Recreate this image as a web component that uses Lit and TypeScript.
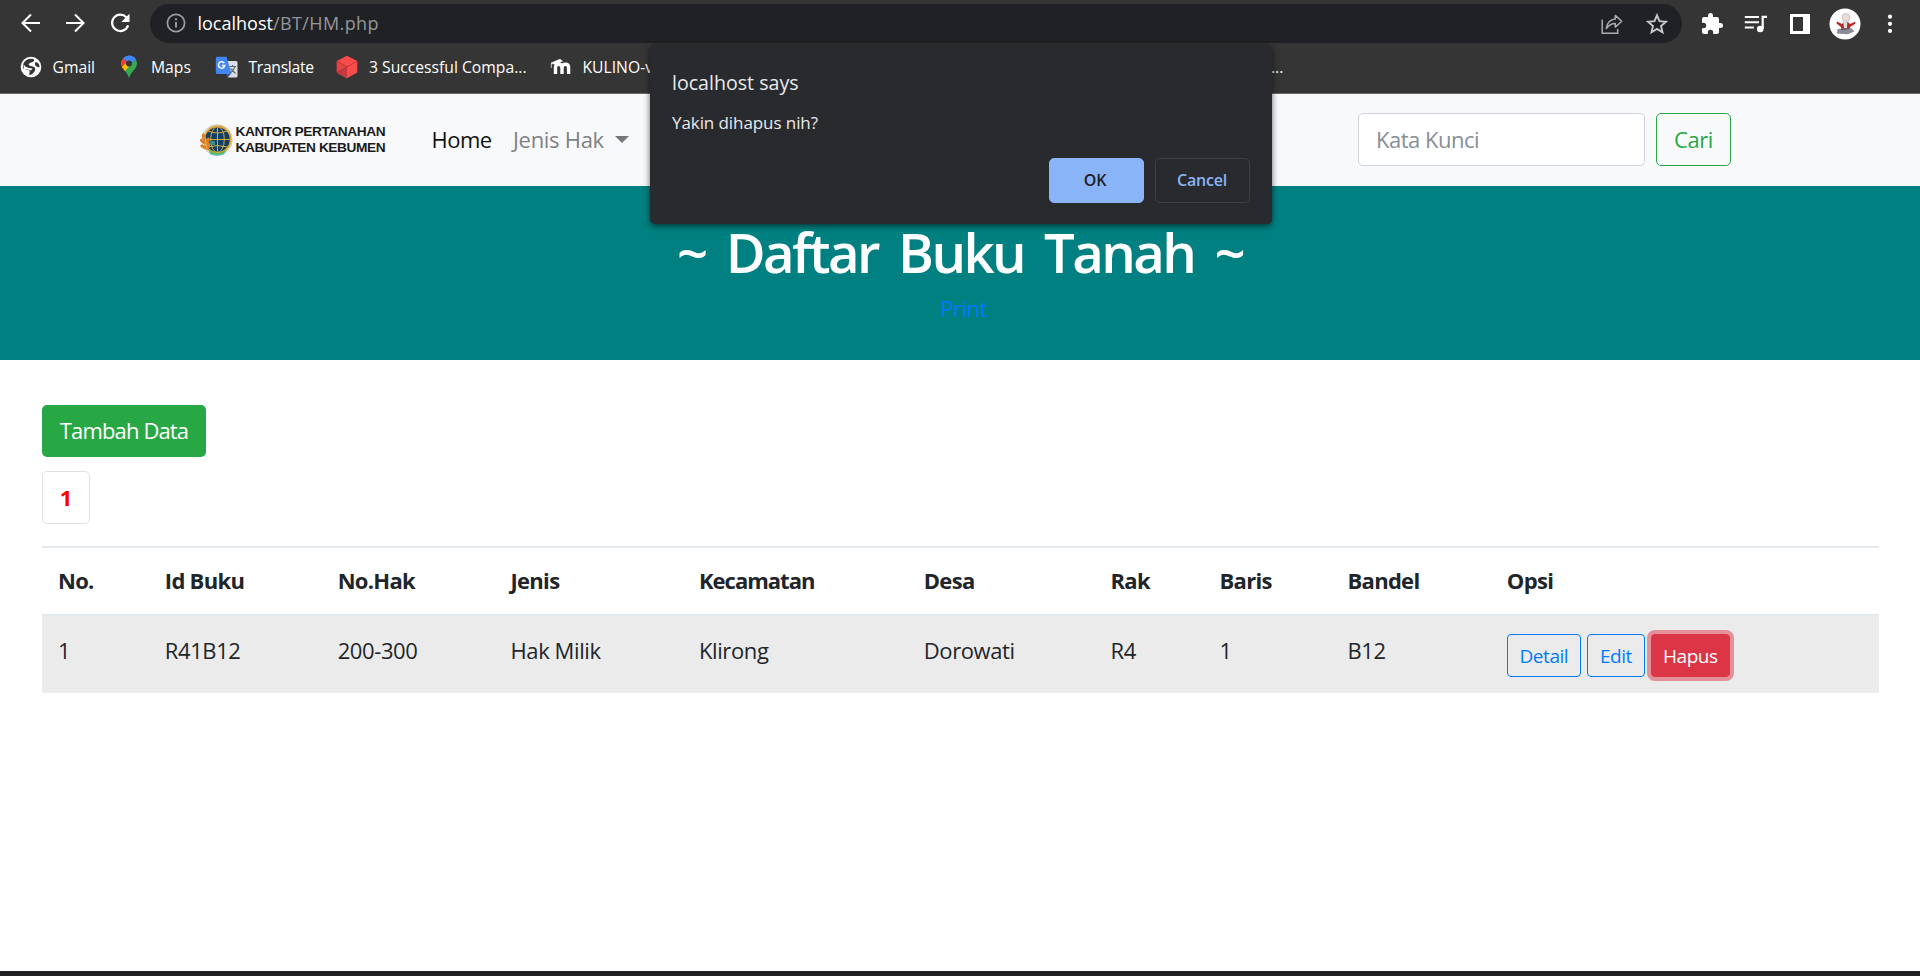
import { LitElement, html, css, svg } from "lit";
import { customElement, property } from "lit/decorators.js";

const globe = svg`<svg width="22" height="22" viewBox="0 0 22 22"><circle cx="11" cy="11" r="10.300" fill="#fff"/><path d="M3.200 8C4.500 4.500 8 2.600 12 2.800 13.500 3 14.500 3.500 14 5 12.500 6.800 9.500 6.500 8.700 8 8.500 9.500 10 10 12 10.200 14.500 10.500 15.800 12 15.200 14 14.500 16.500 12 18.500 9.500 19.200 8.800 17.500 10.500 15.500 9 14.300 7 13.500 4.500 13.800 3 12.300Z" fill="#353535"/><path d="M3.500 8.500Q5.500 11.500 9 12L12.500 12.500 11 14.500 8 13.500 4 13.500Z" fill="#fff"/><path d="M15 6.500Q17.500 5.800 19 8.200 19.700 10 19.300 11.500 16.500 11.300 15 9Z" fill="#353535"/></svg>`;
const maps = svg`<svg width="18" height="24" viewBox="0 0 18 24"><path d="M9 .5a8 8 0 0 0-6.200 3L7 7l4.500-6.100A8 8 0 0 0 9 .5Z" fill="#4285f4"/><path d="M2.800 3.500A8 8 0 0 0 1.800 12L7 7Z" fill="#ea4335"/><path d="M1.800 12l3.300 4.300L11 10.500 7 7Z" fill="#fbbc04"/><path d="M11.500.9A8 8 0 0 1 16 12.200C14.500 15 10.500 18 9 23.500 8.300 20.500 7 18.500 5.100 16.300L15.500 4Z" fill="#34a853"/><path d="M9 .5A8 8 0 0 1 15.900 4.200L11 9 7 6Z" fill="#4285f4"/><circle cx="9" cy="8.400" r="3" fill="#353535"/></svg>`;
const translate = svg`<svg width="23" height="23" viewBox="0 0 23 23"><path d="M9 5h12a1.500 1.500 0 0 1 1.500 1.500V20a1.500 1.500 0 0 1-1.500 1.500h-8Z" fill="#dcdfe3"/><path d="M12 17h4.500L12.500 22Z" fill="#3552b5"/><path d="M2 .8h9.500L16.500 18H2A1.500 1.500 0 0 1 .8 16.500V2A1.500 1.500 0 0 1 2 .8Z" fill="#4285f4"/><path d="M9.300 7.200A3.200 3.200 0 1 0 9.800 9.500H6.800" fill="none" stroke="#fff" stroke-width="1.500"/><path d="M14.300 10.500H21M17.500 9v1.500M20 10.500C19 14 17 15.500 15.200 17M15.500 12.500 20.500 17.500" fill="none" stroke="#5d6a75" stroke-width="1.100"/></svg>`;
const cube = svg`<svg width="22" height="24" viewBox="0 0 22 24"><path d="M11 .8 21.300 6v11.500L11 23.200.8 17.500V6Z" fill="#fa4b4b"/><path d="M.8 6 11 11.800v11.400L.8 17.500Z" fill="#e54345"/><path d="M11 11.800.8 17.500 11 23.200Z" fill="#c63c3e"/><path d="M.8 6 11 11.800 21.300 6M11 12 1 17.400" fill="none" stroke="#9a2d30" stroke-width=".6"/></svg>`;
const moodle = svg`<svg width="22" height="18" viewBox="0 0 22 18"><path d="M5.500 16V9.500Q5.500 6.300 8.700 6.300T12 9.500V16M12 9.500Q12 6.300 15.300 6.300T18.600 9.500V16" fill="none" stroke="#fff" stroke-width="3.400"/><path d="M1 5 10 1.200 12.500 3 6 6.500 1.300 5.500V10" fill="#fff" stroke="#eee" stroke-width=".7"/></svg>`;
const back = svg`<svg width="24" height="24" viewBox="0 0 24 24"><path d="M21 12H4M12 3.500 3.500 12l8.500 8.500" fill="none" stroke="#fff" stroke-width="2"/></svg>`;
const forward = svg`<svg width="24" height="24" viewBox="0 0 24 24"><path d="M3 12h17M12 3.500 20.500 12 12 20.500" fill="none" stroke="#fff" stroke-width="2"/></svg>`;
const reload = svg`<svg width="24" height="24" viewBox="0 0 24 24"><path d="M18.300 6.200A8.200 8.200 0 1 0 20.100 14.300" fill="none" stroke="#fff" stroke-width="2.200"/><path d="M21.500 2.800v8.200h-8.200Z" fill="#fff"/></svg>`;
const info = svg`<svg width="20" height="20" viewBox="0 0 20 20"><circle cx="10" cy="10" r="8.600" fill="none" stroke="#9aa0a6" stroke-width="1.700"/><path d="M10 9v5.500M10 5.200v2" stroke="#9aa0a6" stroke-width="1.900"/></svg>`;
const share = svg`<svg width="22" height="22" viewBox="0 0 22 22"><path d="M1.200 6.500v13.700h15.500V16" fill="none" stroke="#a9abae" stroke-width="1.500"/><path d="M5.300 15.500C6 10 9 6.500 14.300 6V2.400L20.700 8.300l-6.400 5.800V10.500C10 10.500 7.500 12.500 5.300 15.500Z" fill="none" stroke="#a9abae" stroke-width="1.500" stroke-linejoin="round"/></svg>`;
const star = svg`<svg width="22" height="22" viewBox="0 0 22 22"><path d="M11 2.300 13.500 8.200 19.900 8.800 15 13 16.500 19.300 11 15.900 5.500 19.300 7 13 2.100 8.800 8.500 8.200Z" fill="none" stroke="#c6c7c9" stroke-width="1.900"/></svg>`;
const puzzle = svg`<svg width="24" height="24" viewBox="0 0 24 24"><path d="M20.500 11H19V7c0-1.100-.9-2-2-2h-4V3.500a2.500 2.500 0 0 0-5 0V5H4c-1.100 0-2 .9-2 2v3.800h1.500a2.700 2.700 0 0 1 0 5.400H2V20c0 1.100.9 2 2 2h3.800v-1.500a2.700 2.700 0 0 1 5.400 0V22H17c1.100 0 2-.9 2-2v-4h1.500a2.500 2.500 0 0 0 0-5Z" fill="#fff"/></svg>`;
const queue = svg`<svg width="24" height="20" viewBox="0 0 24 20"><path d="M.8 3H15M.8 8.200H15M.8 13.600H10" stroke="#fff" stroke-width="2"/><path d="M18.700 15V2.900H23" fill="none" stroke="#fff" stroke-width="2.200"/><circle cx="16.200" cy="15" r="3.300" fill="#fff"/></svg>`;
const panel = svg`<svg width="20" height="20" viewBox="0 0 20 20"><path d="M0 0h20v20H0Z" fill="#fff"/><path d="M3 3h10v14H3Z" fill="#353535"/></svg>`;
const avatar = svg`<svg width="32" height="32" viewBox="0 0 32 32"><circle cx="16" cy="16" r="15.500" fill="#fff"/><path d="M8 13.500 13 16l2-2h4l2 2 5.500-2.500-.5 2.500-5 3-.5 3h-8L12 19l-4.500-3.500Z" fill="#b5292b"/><path d="M14.300 13.500h4L18 20h-3Z" fill="#ddd"/><circle cx="17" cy="9.500" r="4" fill="#ecdcd5" stroke="#aaa" stroke-width=".6"/><path d="M8.500 21 22 20l3.500 3.500-7 2.700L8 25.500Z" fill="#898a9a"/><path d="M12 21.500l8-.8" stroke="#555" /></svg>`;
const dots = svg`<svg width="6" height="20" viewBox="0 0 6 20"><circle cx="3" cy="2.700" r="2.100" fill="#fff"/><circle cx="3" cy="9.800" r="2.100" fill="#fff"/><circle cx="3" cy="16.900" r="2.100" fill="#fff"/></svg>`;
const emblem = svg`<svg width="34" height="34" viewBox="0 0 34 34"><circle cx="18" cy="17" r="15.300" fill="none" stroke="#c5cbce" stroke-width=".9"/><circle cx="18.500" cy="16.500" r="13.300" fill="#123f63" stroke="#e2aa35" stroke-width="2"/><path d="M8.500 26Q18 33 28 26.500L25.500 30Q18 34 11 30Z" fill="#67b84a"/><path d="M11 30.500Q18 34 25.500 30.500" fill="none" stroke="#4fb3d9" stroke-width="1.200"/><g fill="none" stroke="#d8aa3b" stroke-width="1"><ellipse cx="18.500" cy="16.500" rx="6.800" ry="13"/><path d="M18.500 3.500v25M9 8q9.500 4 19 0M6 16.500h25M8.500 24q10-3 20 0"/></g><path d="M11 18h5v4h-5Z" fill="#3f8c8c"/><g fill="#dc8127"><ellipse cx="5" cy="14" rx="1.900" ry="3.600" transform="rotate(-15 5 14)"/><ellipse cx="4" cy="18.500" rx="1.700" ry="3.600" transform="rotate(-55 4 18.500)"/><ellipse cx="5" cy="24" rx="1.700" ry="4" transform="rotate(-65 5 24)"/><ellipse cx="8.700" cy="18" rx="1.700" ry="3.600" transform="rotate(15 8.700 18)"/><ellipse cx="9" cy="23.500" rx="1.900" ry="4" transform="rotate(15 9 23.500)"/></g><path d="M6 14 8 27" stroke="#f0ad45"/></svg>`;

@customElement("browser-chrome")
class BrowserChrome extends LitElement {
  static styles = css`
    :host { display: block; height: 94px; box-sizing: border-box; background: #353535; border-bottom: 1px solid #676767; color: #fff; font-weight: 400; }
    svg { display: block; flex: none; }
    .bar { display: flex; align-items: center; height: 46px; padding: 0 26px 0 18.500px; box-sizing: border-box; }
    .nav { display: flex; gap: 20.500px; width: 131.500px; flex: none; }
    .url { display: flex; align-items: center; height: 39px; width: 1532px; flex: none; box-sizing: border-box; border-radius: 20px; background: #202124; padding: 0 14px 0 16px; font-size: 18px; }
    .addr { flex: 1; padding: 0 0 1px 11.500px; line-height: 26px; }
    .path { color: #95979b; letter-spacing: 0.400px; }
    .acts { display: flex; gap: 23px; align-items: center; padding-top: 2px; }
    .tools { display: flex; align-items: center; padding-left: 18px; }
    .tools svg { margin-top: 1px; }
    .tools svg:nth-child(2) { margin-left: 20px; }
    .tools svg:nth-child(3) { margin-left: 22px; }
    .tools svg:nth-child(4) { margin-left: 19px; }
    .tools svg:nth-child(5) { margin-left: 26px; }
    .marks { display: flex; height: 42px; align-items: center; padding-left: 20px; font-size: 15.700px; white-space: nowrap; }
    .mark { display: flex; align-items: center; gap: 11px; box-sizing: border-box; }
    .m0 { width: 100px; gap: 10.500px; } .m1 { width: 94.500px; gap: 13px; } .m2 { width: 121.500px; letter-spacing: -0.300px; } .m3 { width: 213.500px; gap: 11px; } .m4 { width: 721.500px; }
  `;
  render() {
    return html`
      <div class="bar">
        <div class="nav">${back}${forward}${reload}</div>
        <div class="url">${info}<div class="addr">localhost<span class="path">/BT/HM.php</span></div><div class="acts">${share}${star}</div></div>
        <div class="tools">${puzzle}${queue}${panel}${avatar}${dots}</div>
      </div>
      <div class="marks">
        <div class="mark m0">${globe}<span>Gmail</span></div>
        <div class="mark m1">${maps}<span>Maps</span></div>
        <div class="mark m2">${translate}<span>Translate</span></div>
        <div class="mark m3">${cube}<span>3 Successful Compa...</span></div>
        <div class="mark m4">${moodle}<span>KULINO-v</span></div>
        <span>...</span>
      </div>`;
  }
}

@customElement("confirm-dialog")
class ConfirmDialog extends LitElement {
  @property() heading = "";
  @property() message = "";
  static styles = css`
    :host { display: flex; flex-direction: column; box-sizing: border-box; width: 621.500px; height: 180px; padding: 24px 22px 21px; background: #292a2d; color: #e8eaed; border-radius: 5px; box-shadow: 0 2px 6px rgba(0,0,0,.6); font-weight: 400; }
    .h { font-size: 19.600px; line-height: 30px; }
    .m { font-size: 17px; line-height: 24px; margin-top: 13px; letter-spacing: -0.080px; flex: 1; }
    .row { display: flex; justify-content: flex-end; gap: 11px; }
    .b { box-sizing: border-box; width: 95px; height: 45px; border-radius: 5px; border: 1px solid #3c4043; color: #8ab4f8; display: grid; place-items: center; font-size: 16px; font-weight: 600; letter-spacing: -0.200px; padding-bottom: 1px; }
    .ok { background: #8ab4f8; border-color: #8ab4f8; color: #202124; padding-right: 2px; }
  `;
  render() {
    return html`<div class="h">${this.heading}</div><div class="m">${this.message}</div>
      <div class="row"><div class="b ok">OK</div><div class="b">Cancel</div></div>`;
  }
}

@customElement("book-table")
class BookTable extends LitElement {
  static styles = css`
    :host { display: block; color: #212529; }
    .r { display: grid; grid-template-columns: 106.800px 172.900px 172.800px 188.500px 224.800px 186.700px 109px 128px 159.400px 1fr; }
    .r > div { padding-left: 16px; }
    .head { height: 66px; line-height: 64px; border-top: 2px solid #e4e9ed; border-bottom: 2px solid #e4e9ed; font-weight: 700; letter-spacing: -0.700px; }
    .head > .wide { letter-spacing: -1px; }
    .body { height: 77px; background: #ebebeb; letter-spacing: -0.400px; line-height: 34px; }
    .body > div { padding-top: 17px; }
    .body > .opts { display: flex; padding-top: 18px; gap: 6px; }
    .btn { box-sizing: border-box; width: 74px; height: 43px; border: 1px solid #007bff; border-radius: 4px; color: #007bff; font-size: 19px; line-height: 42px; text-align: center; letter-spacing: -0.450px; }
    .edit { width: 58px; }
    .del { width: 79px; background: #dc3545; border-color: #dc3545; color: #fff; box-shadow: 0 0 0 4px rgba(220,53,69,.5); }
  `;
  render() {
    const heads = ["No.", "Id Buku", "No.Hak", "Jenis", "Kecamatan", "Desa", "Rak", "Baris", "Bandel", "Opsi"];
    const row = ["1", "R41B12", "200-300", "Hak Milik", "Klirong", "Dorowati", "R4", "1", "B12"];
    return html`<div class="r head">${heads.map((h) => html`<div class=${h.length > 8 ? "wide" : ""}>${h}</div>`)}</div>
      <div class="r body">${row.map((c) => html`<div>${c}</div>`)}
        <div class="opts"><span class="btn">Detail</span><span class="btn edit">Edit</span><span class="btn del">Hapus</span></div>
      </div>`;
  }
}

@customElement("app-root")
class AppRoot extends LitElement {
  static styles = css`
    :host { display: flex; flex-direction: column; position: relative; height: 976px; overflow: hidden; background: #fff; font-family: "Open Sans", "Noto Sans", sans-serif; font-size: 22px; font-weight: 400; color: #212529; }
    .nav { display: flex; align-items: center; height: 92px; box-sizing: border-box; background: #f8f9fa; padding: 0 189px 1px 199px; }
    .logo { display: flex; align-items: center; gap: 2.500px; width: 232.500px; font: bold 13.700px/16px "Liberation Sans", Arial, sans-serif; color: #1b1b1b; white-space: nowrap; letter-spacing: -0.430px; }
    .home { width: 81.500px; line-height: 28px; padding-bottom: 1px; color: #111; letter-spacing: -0.500px; }
    .jenis { color: #808184; display: flex; align-items: center; gap: 11.500px; flex: 1; line-height: 28px; padding-bottom: 1px; letter-spacing: -0.300px; }
    .caret { border: 7px solid transparent; border-top-color: #777; border-bottom: 0; }
    .in { box-sizing: border-box; width: 287px; height: 53px; border: 1px solid #ced4da; border-radius: 5px; background: #fff; color: #868e96; padding-left: 17px; line-height: 51px; margin-right: 11px; letter-spacing: -0.500px; }
    .cari { box-sizing: border-box; width: 75px; height: 53px; border: 1px solid #28a745; border-radius: 5px; color: #28a745; text-align: center; line-height: 51px; letter-spacing: -0.400px; }
    .hero { height: 174px; box-sizing: border-box; background: #008080; text-align: center; padding-top: 33px; }
    .title { font-size: 54.500px; line-height: 67px; font-weight: 600; color: #fff; letter-spacing: -2.600px; word-spacing: 8.500px; }
    .print { color: #007bff; line-height: 34px; margin-top: 5px; padding-left: 7px; letter-spacing: -0.500px; }
    .main { flex: 1; padding: 45px 41px 0 42px; }
    .add { width: 164px; height: 52px; border-radius: 5px; background: #28a745; color: #fff; text-align: center; line-height: 51px; letter-spacing: -0.850px; }
    .page { box-sizing: border-box; width: 48px; height: 53px; border: 1px solid #dee2e6; border-radius: 5px; margin: 14px 0 22px; color: #f00; font-weight: 700; text-align: center; line-height: 51px; }
    .foot { height: 5px; background: #1f1f22; }
    .dialog { position: absolute; left: 650px; top: 44px; }
  `;
  render() {
    return html`
      <browser-chrome></browser-chrome>
      <div class="nav">
        <div class="logo">${emblem}<div><div>KANTOR PERTANAHAN</div><div>KABUPATEN KEBUMEN</div></div></div>
        <div class="home">Home</div>
        <div class="jenis">Jenis Hak<span class="caret"></span></div>
        <div class="in">Kata Kunci</div>
        <div class="cari">Cari</div>
      </div>
      <div class="hero"><div class="title">~ Daftar Buku Tanah ~</div><div class="print">Print</div></div>
      <div class="main">
        <div class="add">Tambah Data</div>
        <div class="page">1</div>
        <book-table></book-table>
      </div>
      <div class="foot"></div>
      <confirm-dialog class="dialog" heading="localhost says" message="Yakin dihapus nih?"></confirm-dialog>`;
  }
}
